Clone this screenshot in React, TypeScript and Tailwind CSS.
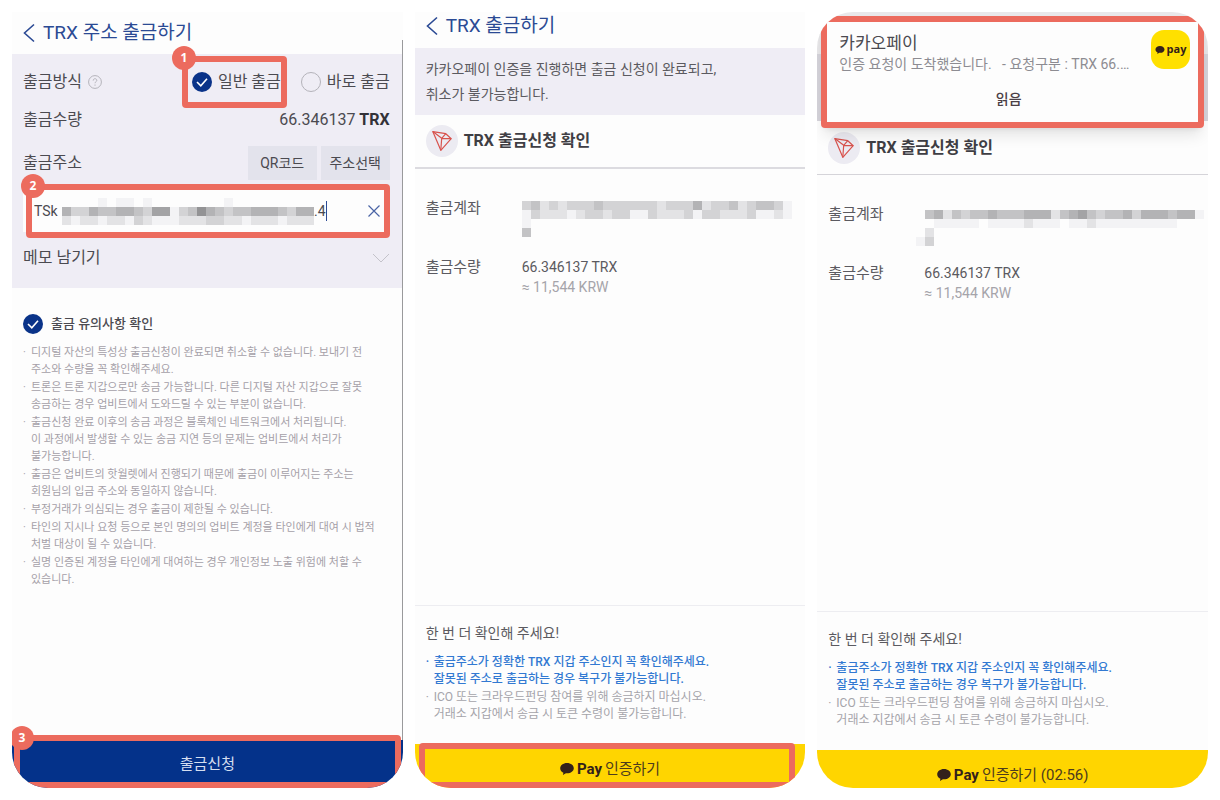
import type { ReactNode } from 'react';

const LINE = 'absolute border-6 border-[#ec6b5e] pointer-events-none';

const NOTICES = [
  ['디지털 자산의 특성상 출금신청이 완료되면 취소할 수 없습니다. 보내기 전', '주소와 수량을 꼭 확인해주세요.'],
  ['트론은 트론 지갑으로만 송금 가능합니다. 다른 디지털 자산 지갑으로 잘못', '송금하는 경우 업비트에서 도와드릴 수 있는 부분이 없습니다.'],
  ['출금신청 완료 이후의 송금 과정은 블록체인 네트워크에서 처리됩니다.', '이 과정에서 발생할 수 있는 송금 지연 등의 문제는 업비트에서 처리가', '불가능합니다.'],
  ['출금은 업비트의 핫월렛에서 진행되기 때문에 출금이 이루어지는 주소는', '회원님의 입금 주소와 동일하지 않습니다.'],
  ['부정거래가 의심되는 경우 출금이 제한될 수 있습니다.'],
  ['타인의 지시나 요청 등으로 본인 명의의 업비트 계정을 타인에게 대여 시 법적', '처벌 대상이 될 수 있습니다.'],
  ['실명 인증된 계정을 타인에게 대여하는 경우 개인정보 노출 위험에 처할 수', '있습니다.'],
];

// grey level of every 9px cell, '-' leaves the cell empty
const INPUT_MASK = [
  '----f-ff-f--------f---------',
  'bddbccbbcdaafdc9bcdccbbbcdbb',
  'efeefeefdefffeeeddeefeeefeee',
];
const ACCOUNT_MASK = [
  'dcededddcddddddedddbeddcedccdf',
  'fdeeefeddeddffdeeedfddeeedffef',
  'f-----------------------------',
  'c-----------------------------',
];
const ACCOUNT_MASK_2 = [
  '-cbecdccbcccbbbecbacdccbdbbbcbbf',
  '--fffff-ffffefff-ffefffffffff---',
  '-e------------------------------',
  'fd------------------------------',
];

const Mosaic = ({ rows, className }: { rows: string[]; className: string }) => (
  <svg
    className={className}
    viewBox={`0 0 ${rows[0].length * 9} ${rows.length * 9}`}
    shapeRendering="crispEdges"
    aria-hidden="true"
  >
    {rows.map((row, y) =>
      row.split('').map((cell, x) =>
        cell === '-' ? null : (
          <rect key={`${x}-${y}`} x={x * 9} y={y * 9} width="9" height="9" fill={`#${cell}3${cell}3${cell}5`} />
        )
      )
    )}
  </svg>
);

const Check = () => (
  <svg viewBox="0 0 20 20" className="col-start-1 row-start-1 size-5 pointer-events-none" fill="none" stroke="#fff" strokeWidth="1.6">
    <path d="M5 10l3.8 3.8L15 6.8" />
  </svg>
);

const Talk = ({ className }: { className: string }) => (
  <svg viewBox="0 0 14 12" className={className} fill="currentColor" aria-hidden="true">
    <path d="M7 0C3.1 0 .2 2.3.2 5.2c0 2 1.3 3.6 3.2 4.5L2.9 12l3-1.8c.4 0 .7.1 1.1.1 3.9 0 6.8-2.3 6.8-5.1S10.9 0 7 0z" />
  </svg>
);

const Tron = () => (
  <span className="grid size-8 place-items-center rounded-full bg-[#ecebf2]">
    <svg viewBox="0 0 20 20" className="size-5" fill="none" stroke="#d8534e" strokeWidth="1.2" strokeLinejoin="round" aria-hidden="true">
      <path d="M.8.6l13 2.1 5.4 5L8.8 19.3z" />
      <path d="M.8.6l8.9 6.7 4.1-4.6M9.7 7.3l9.5.4M9.7 7.3l-.9 12" />
    </svg>
  </span>
);

const Badge = ({ children, className }: { children: ReactNode; className: string }) => (
  <span
    className={`absolute grid size-6 place-items-center rounded-full bg-[#ec6b5e] font-['Open_Sans'] text-xs font-bold text-white ${className}`}
  >
    {children}
  </span>
);

const Header = ({ title, className }: { title: string; className: string }) => (
  <header className={`flex items-center gap-2 pl-[11px] text-[#2b4a94] ${className}`}>
    <button type="button" aria-label="뒤로">
      <svg viewBox="0 0 12 20" className="h-5 w-3" fill="none" stroke="currentColor" strokeWidth="1.6">
        <path d="M11 1.5L1.5 10l9.5 8.5" />
      </svg>
    </button>
    <h1 className="text-[19px] leading-6">{title}</h1>
  </header>
);

const Bullets = ({ items, className }: { items: string[][]; className: string }) => (
  <ul className={`flex flex-col gap-px leading-[17px] ${className}`}>
    {items.map((lines) => (
      <li key={lines[0]} className="flex">
        <span className="w-2 shrink-0">·</span>
        <span>
          {lines.map((line) => (
            <span key={line} className="block whitespace-nowrap">
              {line}
            </span>
          ))}
        </span>
      </li>
    ))}
  </ul>
);

const Phone = ({ children, className }: { children: ReactNode; className: string }) => (
  <section className={`relative flex min-w-0 flex-1 flex-col overflow-hidden bg-[#fdfdfd] ${className}`}>
    {children}
  </section>
);

const WithdrawForm = () => (
  <Phone className="rounded-b-[36px]">
    <Header title="TRX 주소 출금하기" className="h-[42px]" />
    <form className="bg-[#efedf5] pt-2.5 pr-[13px] pb-1 pl-[11px] text-base text-[#4b4a50]">
      <div className="flex h-9 items-center">
        <span>출금방식</span>
        <svg viewBox="0 0 14 14" className="ml-1.5 size-3.5" fill="none" stroke="#b4b3ba" aria-hidden="true">
          <circle cx="7" cy="7" r="6.4" />
          <path d="M5.2 5.6c0-1.2.8-1.9 1.8-1.9s1.8.7 1.8 1.7c0 1.3-1.8 1.4-1.8 2.8M7 9.5v1.2" />
        </svg>
        <label className="relative ml-auto flex items-center gap-1.5">
          <span className="grid">
            <input
              type="radio"
              name="method"
              defaultChecked
              className="col-start-1 row-start-1 size-5 appearance-none rounded-full bg-[#0a3389]"
            />
            <Check />
          </span>
          일반 출금
          <span className={`${LINE} -inset-y-3.5 -right-1.5 -left-2.5 rounded-sm`} />
          <Badge className="-top-6 -left-5">1</Badge>
        </label>
        <label className="ml-5 flex items-center gap-1.5">
          <input type="radio" name="method" className="size-5 appearance-none rounded-full border border-[#b4b3ba]" />
          바로 출금
        </label>
      </div>
      <div className="flex h-10 items-center justify-between">
        <span>출금수량</span>
        <span>
          66.346137 <b className="text-[#333238]">TRX</b>
        </span>
      </div>
      <div className="flex h-[46px] items-center gap-1">
        <label htmlFor="address" className="mr-auto">
          출금주소
        </label>
        <button type="button" className="h-[34px] w-[69px] bg-[#e3e3ec] text-sm">
          QR코드
        </button>
        <button type="button" className="h-[34px] w-[69px] bg-[#e3e3ec] text-sm">
          주소선택
        </button>
      </div>
      <div className="relative mt-1 flex h-[42px] items-center bg-[#fdfdfd] pr-2.5 pl-[11px]">
        <input id="address" defaultValue="TSk" className="w-6 bg-transparent text-sm outline-none" />
        <Mosaic rows={INPUT_MASK} className="ml-1 h-[27px] w-[252px] shrink-0" />
        <span className="text-sm">.4</span>
        <span className="h-5 w-px bg-[#2b4a94]" />
        <button type="button" aria-label="지우기" className="ml-auto text-[#4a64a5]">
          <svg viewBox="0 0 12 12" className="size-3" fill="none" stroke="currentColor" strokeWidth="1.2">
            <path d="M.5.5l11 11M11.5.5l-11 11" />
          </svg>
        </button>
        <span className={`${LINE} -top-1.5 right-0 -bottom-1.5 left-[3px] rounded-sm`} />
        <Badge className="-top-4 -left-0.5">2</Badge>
      </div>
      <button type="button" className="flex h-[52px] w-full items-center justify-between">
        메모 남기기
        <svg viewBox="0 0 18 10" className="h-2.5 w-[18px]" fill="none" stroke="#c4c3ca" aria-hidden="true">
          <path d="M1 1l8 8 8-8" />
        </svg>
      </button>
    </form>
    <label className="mt-[26px] ml-[11px] flex items-center gap-2 text-[13px] leading-5 font-medium text-[#4b4a50]">
      <span className="grid">
        <input
          type="checkbox"
          defaultChecked
          className="col-start-1 row-start-1 size-5 appearance-none rounded-full bg-[#0a3389]"
        />
        <Check />
      </span>
      출금 유의사항 확인
    </label>
    <Bullets items={NOTICES} className="mt-2.5 pl-[11px] text-[11px] text-[#a5a0a8]" />
    <span className="absolute top-7 right-0 bottom-12 w-px bg-[#9a9a9c]" />
    <div className="relative mt-auto">
      <button type="button" className="h-12 w-full bg-[#04328a] text-[15px] text-[#d5def0]">
        출금신청
      </button>
      <span className={`${LINE} -top-[5px] right-0.5 bottom-0 left-0.5 rounded-t-sm`} />
      <Badge className="-top-3.5 -left-0.5">3</Badge>
    </div>
  </Phone>
);

type ConfirmProps = {
  mask: string[];
  maskClass: string;
  lineClass: string;
};

const ConfirmBody = ({ mask, maskClass, lineClass }: ConfirmProps) => (
  <>
    <h2 className={`flex h-[54px] items-center gap-1.5 pl-[11px] text-base font-bold text-[#3f3e44] ${lineClass}`}>
      <Tron />
      TRX 출금신청 확인
    </h2>
    <dl className="grid grid-cols-[96px_1fr] pt-[29px] pl-[11px] text-[15px] text-[#5b5a60]">
      <dt className="h-[59px] leading-5">출금계좌</dt>
      <dd>
        <Mosaic rows={mask} className={maskClass} />
      </dd>
      <dt className="leading-5">출금수량</dt>
      <dd className="text-sm leading-5">
        66.346137 TRX
        <div className="text-[#a5a4aa]">≈ 11,544 KRW</div>
      </dd>
    </dl>
    <div className="mt-auto border-t border-[#ededf1] px-[11px] pt-4 pb-[21px]">
      <h3 className="text-sm leading-[22px] text-[#5b5a60]">한 번 더 확인해 주세요!</h3>
      <Bullets
        items={[['출금주소가 정확한 TRX 지갑 주소인지 꼭 확인해주세요.', '잘못된 주소로 출금하는 경우 복구가 불가능합니다.']]}
        className="mt-2.5 text-xs font-medium text-[#3279d2]"
      />
      <Bullets
        items={[['ICO 또는 크라우드펀딩 참여를 위해 송금하지 마십시오.', '거래소 지갑에서 송금 시 토큰 수령이 불가능합니다.']]}
        className="mt-px text-xs text-[#a5a4aa]"
      />
    </div>
  </>
);

const PayButton = ({ children, className }: { children: ReactNode; className: string }) => (
  <button
    type="button"
    className={`flex w-full items-center justify-center gap-[3px] bg-[#ffd500] text-[15px] text-[#4d3c1d] ${className}`}
  >
    <Talk className="h-3 w-3.5 text-[#33211b]" />
    <b className="text-[#33211b]">Pay</b>
    {children}
  </button>
);

const ConfirmScreen = () => (
  <Phone className="rounded-b-[36px]">
    <Header title="TRX 출금하기" className="h-9 pb-2" />
    <p className="bg-[#efedf5] pt-[9px] pr-3 pb-2 pl-[11px] text-sm leading-[25px] text-[#5b5a60]">
      카카오페이 인증을 진행하면 출금 신청이 완료되고,
      <br />
      취소가 불가능합니다.
    </p>
    <ConfirmBody
      mask={ACCOUNT_MASK}
      maskClass="mt-[3px] h-9 w-[270px]"
      lineClass="border-b-2 border-[#dcdbe0]"
    />
    <div className="relative">
      <PayButton className="h-11 pt-1.5">인증하기</PayButton>
      <span className={`${LINE} -top-px right-2.5 bottom-0 left-1 rounded-t-sm`} />
    </div>
  </Phone>
);

const PushCard = () => (
  <article className="absolute inset-x-1 top-1 h-[112px] rounded-sm bg-[#fdfdfd] shadow-lg">
    <div className="flex justify-between pt-3.5 pr-3.5 pl-[18px]">
      <div className="pt-px">
        <h2 className="text-[17px] leading-6 text-[#4b4a50]">카카오페이</h2>
        <p className="text-sm leading-[18px] whitespace-pre text-[#8d8c92]">인증 요청이 도착했습니다.   - 요청구분 : TRX 66.…</p>
      </div>
      <span className="flex size-[39px] items-center justify-center gap-0.5 rounded-[13px] bg-[#ffe000] font-['Open_Sans'] text-[11px] font-bold text-[#33211b]">
        <Talk className="h-2 w-2.5" />
        pay
      </span>
    </div>
    <button type="button" className="mx-auto mt-4 block pr-2 text-sm font-medium text-[#4b4046]">
      읽음
    </button>
    <span className={`${LINE} inset-0 rounded-sm`} />
  </article>
);

const PushScreen = () => (
  <Phone className="rounded-[36px]">
    <div className="h-[42px] bg-[#e9e8ea]" />
    <div className="h-[67px] bg-[#d6d4db]" />
    <ConfirmBody
      mask={ACCOUNT_MASK_2}
      maskClass="-ml-2 mt-1.5 h-9 w-[288px] max-w-none"
      lineClass="border-b border-[#d5d4d9]"
    />
    <PayButton className="h-[38px] pt-3">인증하기 (02:56)</PayButton>
    <PushCard />
  </Phone>
);

const App = () => (
  <main className="flex min-h-screen gap-3 bg-white p-3 font-[Roboto,'Noto_Sans_CJK_KR',sans-serif]">
    <WithdrawForm />
    <ConfirmScreen />
    <PushScreen />
  </main>
);

export default App;
